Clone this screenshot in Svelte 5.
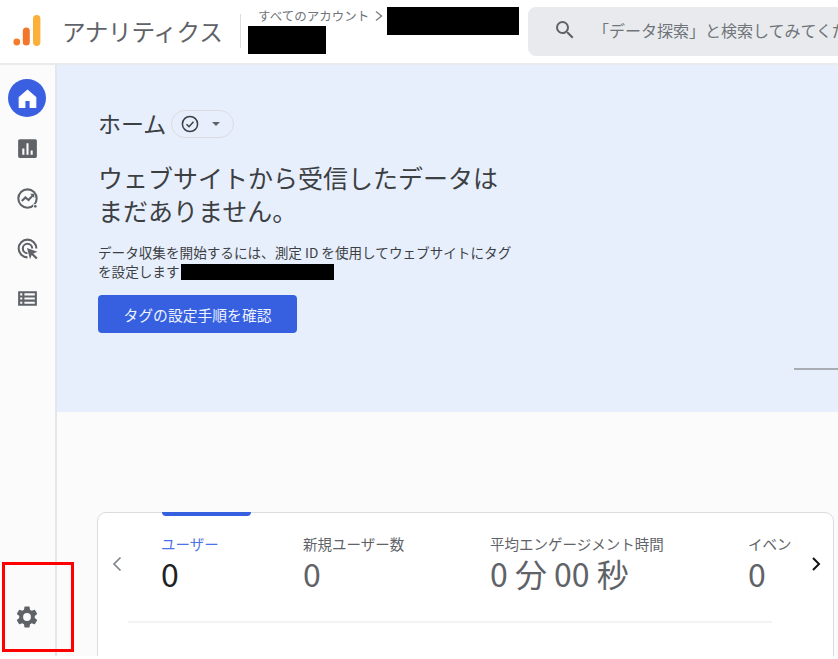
<script>
  const metrics = [
    { label: 'ユーザー', value: '0', w: 142, active: true },
    { label: '新規ユーザー数', value: '0', w: 187 },
    { label: '平均エンゲージメント時間', value: '0 分 00 秒', w: 258 },
    { label: 'イベント数', value: '0', w: 48, clip: true }
  ];
</script>

<div class="page">
  <header class="top">
    <svg class="logo" width="30" height="32" viewBox="0 0 30 32" aria-hidden="true">
      <circle cx="3.8" cy="27" r="3.4" fill="#f57c2a" />
      <rect x="9.8" y="12.5" width="7" height="18" rx="3.5" fill="#f4762b" />
      <rect x="20" y="0" width="7.4" height="31" rx="3.7" fill="#fbb03b" />
    </svg>
    <div class="brand">アナリティクス</div>
    <div class="vline"></div>
    <div class="account">
      <div class="crumb-row">
        <span class="crumb">すべてのアカウント</span>
        <svg width="10" height="14" viewBox="0 0 10 14" aria-hidden="true"><path d="M2 2.500 7.500 7 2 11.500" fill="none" stroke="#80868b" stroke-width="1.500" /></svg>
        <span class="mask mask-a"></span>
      </div>
      <span class="mask mask-b"></span>
    </div>
    <div class="search">
      <svg class="search-ico" width="24" height="24" viewBox="0 0 24 24" aria-hidden="true"><path fill="#5f6368" d="M15.500 14h-.79l-.28-.27A6.470 6.470 0 0 0 16 9.500 6.500 6.500 0 1 0 9.500 16c1.610 0 3.090-.59 4.230-1.570l.27.28v.79l5 4.990L20.490 19l-4.990-5zm-6 0C7.010 14 5 11.990 5 9.500S7.010 5 9.500 5 14 7.010 14 9.500 11.990 14 9.500 14z" /></svg>
      <span class="placeholder">「データ探索」と検索してみてください</span>
    </div>
  </header>

  <div class="body">
    <nav class="rail">
      <div class="rail-items">
        <div class="home-btn">
          <svg width="25" height="25" viewBox="0 0 24 24" aria-hidden="true"><path fill="#fff" stroke="#fff" stroke-width="1" stroke-linejoin="round" d="M12 4 4 11v9.500h5.500V14h5v6.500H20V11z" /></svg>
        </div>
        <svg class="ico" width="25" height="25" viewBox="0 0 24 24" aria-hidden="true"><path fill="#5f6368" fill-rule="evenodd" d="M4.500 3h15A1.500 1.500 0 0 1 21 4.500v15a1.500 1.500 0 0 1-1.500 1.500h-15A1.500 1.500 0 0 1 3 19.500v-15A1.500 1.500 0 0 1 4.500 3zM7 12v6h2v-6zm4-5v11h2V7zm4 7v4h2v-4z" /></svg>
        <svg class="ico" width="25" height="25" viewBox="0 0 24 24" aria-hidden="true"><circle cx="12" cy="12" r="8.800" fill="none" stroke="#5f6368" stroke-width="2" /><path d="M6.500 14.500 10 11l3 2.500 4.500-5" fill="none" stroke="#5f6368" stroke-width="2" /><path d="M14.500 7.500h4v4z" fill="#5f6368" /><rect x="17.500" y="17.500" width="4" height="4" fill="#fbfbfc" /><circle cx="19.500" cy="19.500" r="1.300" fill="#5f6368" /></svg>
        <svg class="ico" width="25" height="25" viewBox="0 0 24 24" aria-hidden="true"><path d="M12 20.500a8.500 8.500 0 1 1 8.500-8.500" fill="none" stroke="#5f6368" stroke-width="2" /><path d="M12 16.500a4.500 4.500 0 1 1 4.500-4.500" fill="none" stroke="#5f6368" stroke-width="2" /><path fill="#5f6368" d="m11.500 11.500 10 3.600-4 1.600 4.200 4.200-1.500 1.500-4.200-4.200-1.600 4z" /></svg>
        <svg class="ico" width="25" height="25" viewBox="0 0 24 24" aria-hidden="true"><path fill="#5f6368" fill-rule="evenodd" d="M3 5h18v14H3zm2 2v2h2V7zm4 0v2h10V7zm-4 4v2h2v-2zm4 0v2h10v-2zm-4 4v2h2v-2zm4 0v2h10v-2z" /></svg>
      </div>
      <svg class="gear" width="26" height="26" viewBox="0 0 24 24" aria-hidden="true"><path fill="#5f6368" d="M19.140 12.940c.04-.3.060-.61.060-.94s-.02-.64-.07-.94l2.030-1.580a.49.490 0 0 0 .12-.61l-1.920-3.320a.49.490 0 0 0-.59-.22l-2.390.96a7.030 7.030 0 0 0-1.620-.94l-.36-2.540a.48.480 0 0 0-.48-.41h-3.840a.47.470 0 0 0-.47.410l-.36 2.540c-.59.24-1.130.57-1.620.94l-2.390-.96a.49.490 0 0 0-.59.22L2.740 8.870a.47.470 0 0 0 .12.610l2.030 1.580c-.05.3-.09.63-.09.940s.02.64.07.94l-2.030 1.580a.49.490 0 0 0-.12.610l1.920 3.320c.12.220.37.290.59.220l2.390-.96c.5.380 1.030.7 1.620.94l.36 2.540c.05.240.24.410.48.410h3.840c.24 0 .44-.17.47-.41l.36-2.540c.59-.24 1.130-.56 1.620-.94l2.390.96c.22.080.47 0 .59-.22l1.920-3.320a.47.470 0 0 0-.12-.61l-2.010-1.580zM12 15.600A3.610 3.610 0 0 1 8.400 12 3.610 3.610 0 0 1 12 8.400a3.610 3.610 0 0 1 3.600 3.600 3.610 3.610 0 0 1-3.600 3.600z" /></svg>
    </nav>

    <main class="main">
      <section class="hero">
        <div class="title-row">
          <h1>ホーム</h1>
          <div class="pill">
            <svg width="20" height="20" viewBox="0 0 20 20" aria-hidden="true"><circle cx="10" cy="10" r="7.600" fill="none" stroke="#3c4043" stroke-width="1.500" /><path d="m6.500 10.200 2.500 2.500 4.500-5" fill="none" stroke="#3c4043" stroke-width="1.500" /></svg>
            <span class="caret"></span>
          </div>
        </div>
        <h2>ウェブサイトから受信したデータは<br />まだありません。</h2>
        <p>データ収集を開始するには、測定 ID を使用してウェブサイトにタグ<br />を設定します<span class="mask mask-c"></span></p>
        <button class="cta">タグの設定手順を確認</button>
        <div class="stub"></div>
      </section>

      <section class="lower">
        <div class="card">
          <div class="tabs">
            <svg class="chev" width="14" height="18" viewBox="0 0 14 18" aria-hidden="true"><path d="M10.500 2.500 4 9l6.500 6.500" fill="none" stroke="#80868b" stroke-width="1.700" /></svg>
            {#each metrics as m}
              <div class="metric" class:active={m.active} class:clip={m.clip} style="width:{m.w}px">
                <div class="label">{m.label}</div>
                <div class="value">{m.value}</div>
              </div>
            {/each}
            <svg class="chev next" width="14" height="18" viewBox="0 0 14 18" aria-hidden="true"><path d="M4 3l6 6-6 6" fill="none" stroke="#111" stroke-width="2" /></svg>
          </div>
          <div class="rule"></div>
        </div>
      </section>
    </main>
  </div>
  <div class="marker"></div>
</div>

<style>
  :global(body) { margin: 0; background: #fff; }
  .page {
    position: relative;
    width: 838px;
    height: 659px;
    overflow: hidden;
    font-family: "Noto Sans CJK JP", Roboto, sans-serif;
    background: #fff;
    display: flex;
    flex-direction: column;
  }
  .top {
    height: 63px;
    flex: none;
    display: flex;
    align-items: flex-start;
    background: #fff;
    border-bottom: 2px solid #e9eaec;
  }
  .logo { margin: 15px 0 0 13px; flex: none; }
  .brand { margin: 13px 0 0 19px; font-size: 23.600px; line-height: 36px; color: #5f6368; flex: none; width: 161px; white-space: nowrap; letter-spacing: -0.3px; }
  .vline { width: 1px; height: 34px; margin: 14px 0 0 17px; background: #dadce0; flex: none; }
  .account { margin: 7px 0 0 7px; width: 271px; flex: none; display: flex; flex-direction: column; }
  .crumb-row { display: flex; align-items: flex-start; height: 19px; }
  .crumb { font-size: 12.500px; line-height: 18px; color: #70757a; margin-left: 10px; white-space: nowrap; }
  .crumb-row svg { margin: 2px 0 0 5px; flex: none; }
  .mask { display: block; background: #000; }
  .mask-a { width: 132px; height: 28px; margin-left: auto; flex: none; }
  .mask-b { width: 78px; height: 28px; margin-top: 0; }
  .search {
    margin: 7px 0 0 9px;
    flex: 1;
    min-width: 0;
    height: 49px;
    box-sizing: border-box;
    background: #e8eaed;
    border-radius: 8px 0 0 8px;
    display: flex;
    align-items: center;
    padding: 0 0 3px 25px;
    overflow: hidden;
  }
  .search-ico { flex: none; }
  .placeholder { margin-left: 16px; font-size: 16px; color: #70757a; white-space: nowrap; }
  .body { height: 591px; flex: none; display: flex; overflow: hidden; }
  .rail {
    width: 54px;
    flex: none;
    border-right: 2px solid #e4e6ea;
    background: #fbfbfc;
    display: flex;
    flex-direction: column;
    align-items: center;
    justify-content: space-between;
    padding: 14px 1px 26px 0;
    box-sizing: content-box;
    height: 551px;
  }
  .rail-items { display: flex; flex-direction: column; align-items: center; gap: 25px; }
  .home-btn {
    width: 38px;
    height: 38px;
    border-radius: 50%;
    background: #3a5fe0;
    display: flex;
    align-items: center;
    justify-content: center;
    margin-bottom: -6px;
  }
  .ico { display: block; }
  .main { flex: 1; min-width: 0; display: flex; flex-direction: column; }
  .hero {
    position: relative;
    height: 347px;
    flex: none;
    background: #e8effc;
    padding: 43px 0 0 41px;
    box-sizing: border-box;
  }
  .title-row { display: flex; align-items: center; gap: 5px; height: 32px; }
  h1 { margin: -2px 0 0; font-size: 23px; line-height: 32px; font-weight: 400; color: #3c4043; }
  .pill {
    width: 63px;
    height: 28px;
    box-sizing: border-box;
    border: 1px solid #dadce0;
    border-radius: 14px;
    display: flex;
    align-items: center;
    gap: 12px;
    padding-left: 8px;
  }
  .caret { width: 0; height: 0; border: 4px solid transparent; border-top: 4px solid #5f6368; border-bottom: 0; }
  h2 { margin: 21px 0 0; font-size: 25px; line-height: 33px; font-weight: 400; color: #3c4043; }
  p { margin: 16px 0 0; font-size: 13.600px; line-height: 19px; color: #3c4043; }
  .mask-c { display: inline-block; width: 153px; height: 16px; margin-left: 1px; vertical-align: -3px; }
  .cta {
    display: block;
    margin-top: 14px;
    width: 199px;
    height: 38px;
    border: 0;
    border-radius: 4px;
    background: #3660e0;
    color: #eef3ff;
    font: 14.800px "Noto Sans CJK JP", sans-serif;
    padding: 0;
  }
  .stub { position: absolute; right: 0; top: 303px; width: 44px; height: 2px; background: #a9adb3; }
  .lower { flex: 1; min-height: 0; background: #fbfbfc; padding: 100px 4px 0 40px; }
  .card {
    height: 200px;
    background: #fff;
    border: 1px solid #dadce0;
    border-radius: 9px;
    position: relative;
    box-sizing: border-box;
  }
  .tabs { display: flex; align-items: flex-start; padding-left: 63px; position: relative; height: 108px; }
  .chev { position: absolute; left: 12px; top: 42px; }
  .chev.next { left: 711px; top: 42px; }
  .metric { flex: none; padding-top: 21px; position: relative; white-space: nowrap; }
  .metric.clip { overflow: hidden; }
  .metric.active::before {
    content: "";
    position: absolute;
    left: 1px;
    top: -1px;
    width: 89px;
    height: 4px;
    background: #3660e0;
    border-radius: 0 0 4px 4px;
  }
  .label { font-size: 14.500px; line-height: 20px; color: #5f6368; }
  .active .label { color: #4a73e8; }
  .value { font-size: 32px; line-height: 39px; color: #5f6368; }
  .active .value { color: #202124; }
  .rule { height: 2px; background: #f1f3f4; margin: 0 0 0 30px; width: 644px; }
  .marker {
    position: absolute;
    left: 2px;
    top: 562px;
    width: 72px;
    height: 90px;
    box-sizing: border-box;
    border: 3px solid #f00;
  }
</style>
